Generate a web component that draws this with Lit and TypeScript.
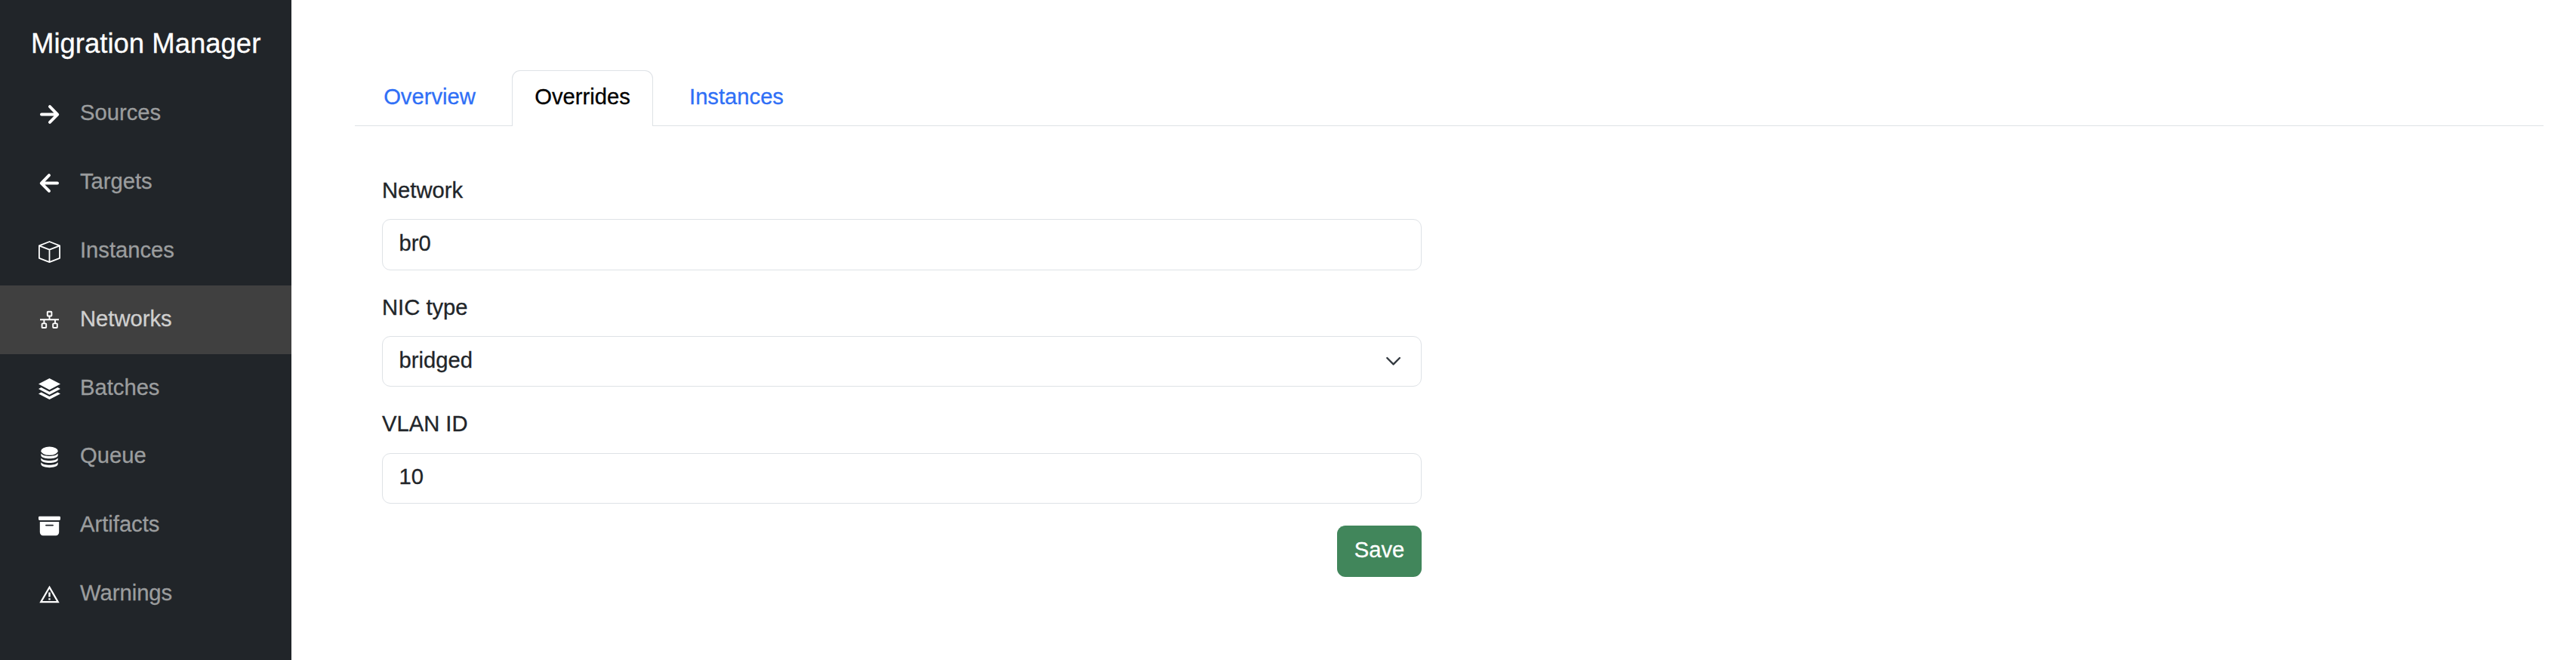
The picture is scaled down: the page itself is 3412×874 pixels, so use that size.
import { LitElement, html, css, svg } from "lit";
import { customElement } from "lit/decorators.js";
import { classMap } from "lit/directives/class-map.js";

const line = (d: string, w: number) =>
  svg`<path d=${d} fill="none" stroke="currentColor" stroke-width=${w} stroke-linecap="round" stroke-linejoin="round"/>`;

// Every glyph is drawn on a 29-unit grid.
const icons: Record<string, unknown> = {
  Sources: line("M4 14.6H24.5M15 4.2L25.2 14.6L15 24.8", 4),
  Targets: line("M25 14.6H4.5M14 4.2L3.8 14.6L14 24.8", 4),
  Instances: svg`<path d="M14.5 1L28.1 6.3V22.8L14.5 28.1L.9 22.8V6.3ZM.9 6.3L14.5 11.7L28.1 6.3M14.5 11.7V28.1" fill="none" stroke="currentColor" stroke-width="1.8" stroke-linejoin="round"/>`,
  Networks: svg`<g fill="none" stroke="currentColor" stroke-width="1.9"><rect x="11.8" y="2.7" width="5.6" height="5.8" rx=".8"/><rect x="4.6" y="18.4" width="5.6" height="5.6" rx=".8"/><rect x="19.2" y="18.4" width="5.6" height="5.6" rx=".8"/><path d="M14.5 8.5V13M2 13.2H27M7.4 13.2V18.4M22 13.2V18.4"/></g>`,
  Batches: svg`<g fill="currentColor"><path d="M14.5 0L29 7.6L14.5 15.2L0 7.6Z"/><path d="M3.6 12L14.5 17.7L25.4 12L29 14.1L14.5 21.7L0 14.1Z"/><path d="M3.6 18.4L14.5 24.1L25.4 18.4L29 20.5L14.5 28.1L0 20.5Z"/></g>`,
  Queue: svg`<g fill="currentColor"><ellipse cx="14.5" cy="6.2" rx="11.2" ry="5.6"/><path d="M3.3 9.5C6.3 14.3 22.7 14.3 25.7 9.5V12.3C24.5 17.7 4.5 17.7 3.3 12.3Z"/><path d="M3.3 15.5C6.3 20.3 22.7 20.3 25.7 15.5V18C24.5 23.4 4.5 23.4 3.3 18Z"/><path d="M3.3 21.2C6.3 26 22.7 26 25.7 21.2V23.8C24.5 29.6 4.5 29.6 3.3 23.8Z"/></g>`,
  Artifacts: svg`<path transform="scale(1.8125)" fill="currentColor" d="M12.643 15C13.979 15 15 13.845 15 12.5V5H1v7.5C1 13.845 2.021 15 3.357 15zM5.5 7h5a.5.5 0 0 1 0 1h-5a.5.5 0 0 1 0-1M.8 1a.8.8 0 0 0-.8.8V3a.8.8 0 0 0 .8.8h14.4A.8.8 0 0 0 16 3V1.8a.8.8 0 0 0-.8-.8z"/>`,
  Warnings: svg`<path d="M14.5 4.6L25.8 24.2H3.2Z" fill="none" stroke="currentColor" stroke-width="2.2"/><path d="M13.3 11.4h2.4v6h-2.4zM13.3 19.2h2.4v2.4h-2.4z" fill="currentColor"/>`,
};

@customElement("app-root")
export class AppRoot extends LitElement {
  static styles = css`
    :host { display: flex; height: 874px; overflow: hidden; background: #fff; color: #212529;
      font: 29.2px/42px "Liberation Sans", Arial, sans-serif; -webkit-text-stroke: 0.3px currentColor; }
    * { box-sizing: border-box; }
    svg { display: block; }
    .sidebar { width: 386px; flex: none; background: #212529; }
    .brand { height: 105.12px; padding: 37px 0 0 41px; font-size: 36.5px; color: #fff; white-space: nowrap; }
    .item { display: flex; height: 90.86px; padding: 23px 0 0 51px; color: #9b9d9e; }
    .item.active { background: #404040; color: #d0d0d0; }
    .icon { width: 29px; height: 29px; margin: 9px 26px 0 0; color: #fff; flex: none; }
    .main { flex: 1; padding: 93px 43px 0 84px; }
    .tabs { display: flex; height: 74px; border-bottom: 1px solid #dee2e6; }
    .tab { height: 74px; padding: 13px 0 0; text-align: center; color: #2f6ff6; border: 1px solid transparent;
      border-bottom: 0; white-space: nowrap; }
    .tab.t0 { width: 198px; }
    .tab.t1 { width: 187px; margin-left: 10px; }
    .tab.t2 { width: 198px; margin-left: 11.5px; }
    .tab.active { background: #fff; color: #000; border-color: #dee2e6; border-radius: 11px 11px 0 0; }
    .form { width: 1377px; margin: 64px 0 0 36px; display: flex; flex-direction: column; }
    .label { margin-bottom: 17px; }
    .box { display: flex; justify-content: space-between; height: 67px; margin-bottom: 28px; padding: 10px 19px 0 21.5px;
      border: 1px solid #dee2e6; border-radius: 11px; }
    .box.first { height: 68px; }
    .box.last { margin: 1px 0 29px; padding-top: 9px; }
    .chevron { width: 29px; height: 29px; margin-top: 8px; margin-right: 3px; color: #343a40; }
    .save { align-self: flex-end; width: 112px; height: 68px; padding: 11px 0 0; border-radius: 11px;
      background: #41865b; color: #fff; text-align: center; }
  `;

  private tabs = ["Overview", "Overrides", "Instances"];

  render() {
    return html`
      <nav class="sidebar">
        <div class="brand">Migration Manager</div>
        ${Object.keys(icons).map(
          (name) => html`<div class=${classMap({ item: true, active: name === "Networks" })}>
            <svg class="icon" viewBox="0 0 29 29">${icons[name]}</svg><span>${name}</span>
          </div>`
        )}
      </nav>
      <main class="main">
        <div class="tabs">
          ${this.tabs.map((t, i) => html`<div class="tab t${i} ${i === 1 ? "active" : ""}">${t}</div>`)}
        </div>
        <div class="form">
          <div class="label">Network</div>
          <div class="box first">br0</div>
          <div class="label">NIC type</div>
          <div class="box">
            <span>bridged</span>
            <svg class="chevron" viewBox="0 0 29 29">${line("M6.3 10L14.6 18.4L22.9 10", 2.4)}</svg>
          </div>
          <div class="label">VLAN ID</div>
          <div class="box last">10</div>
          <div class="save">Save</div>
        </div>
      </main>
    `;
  }
}
